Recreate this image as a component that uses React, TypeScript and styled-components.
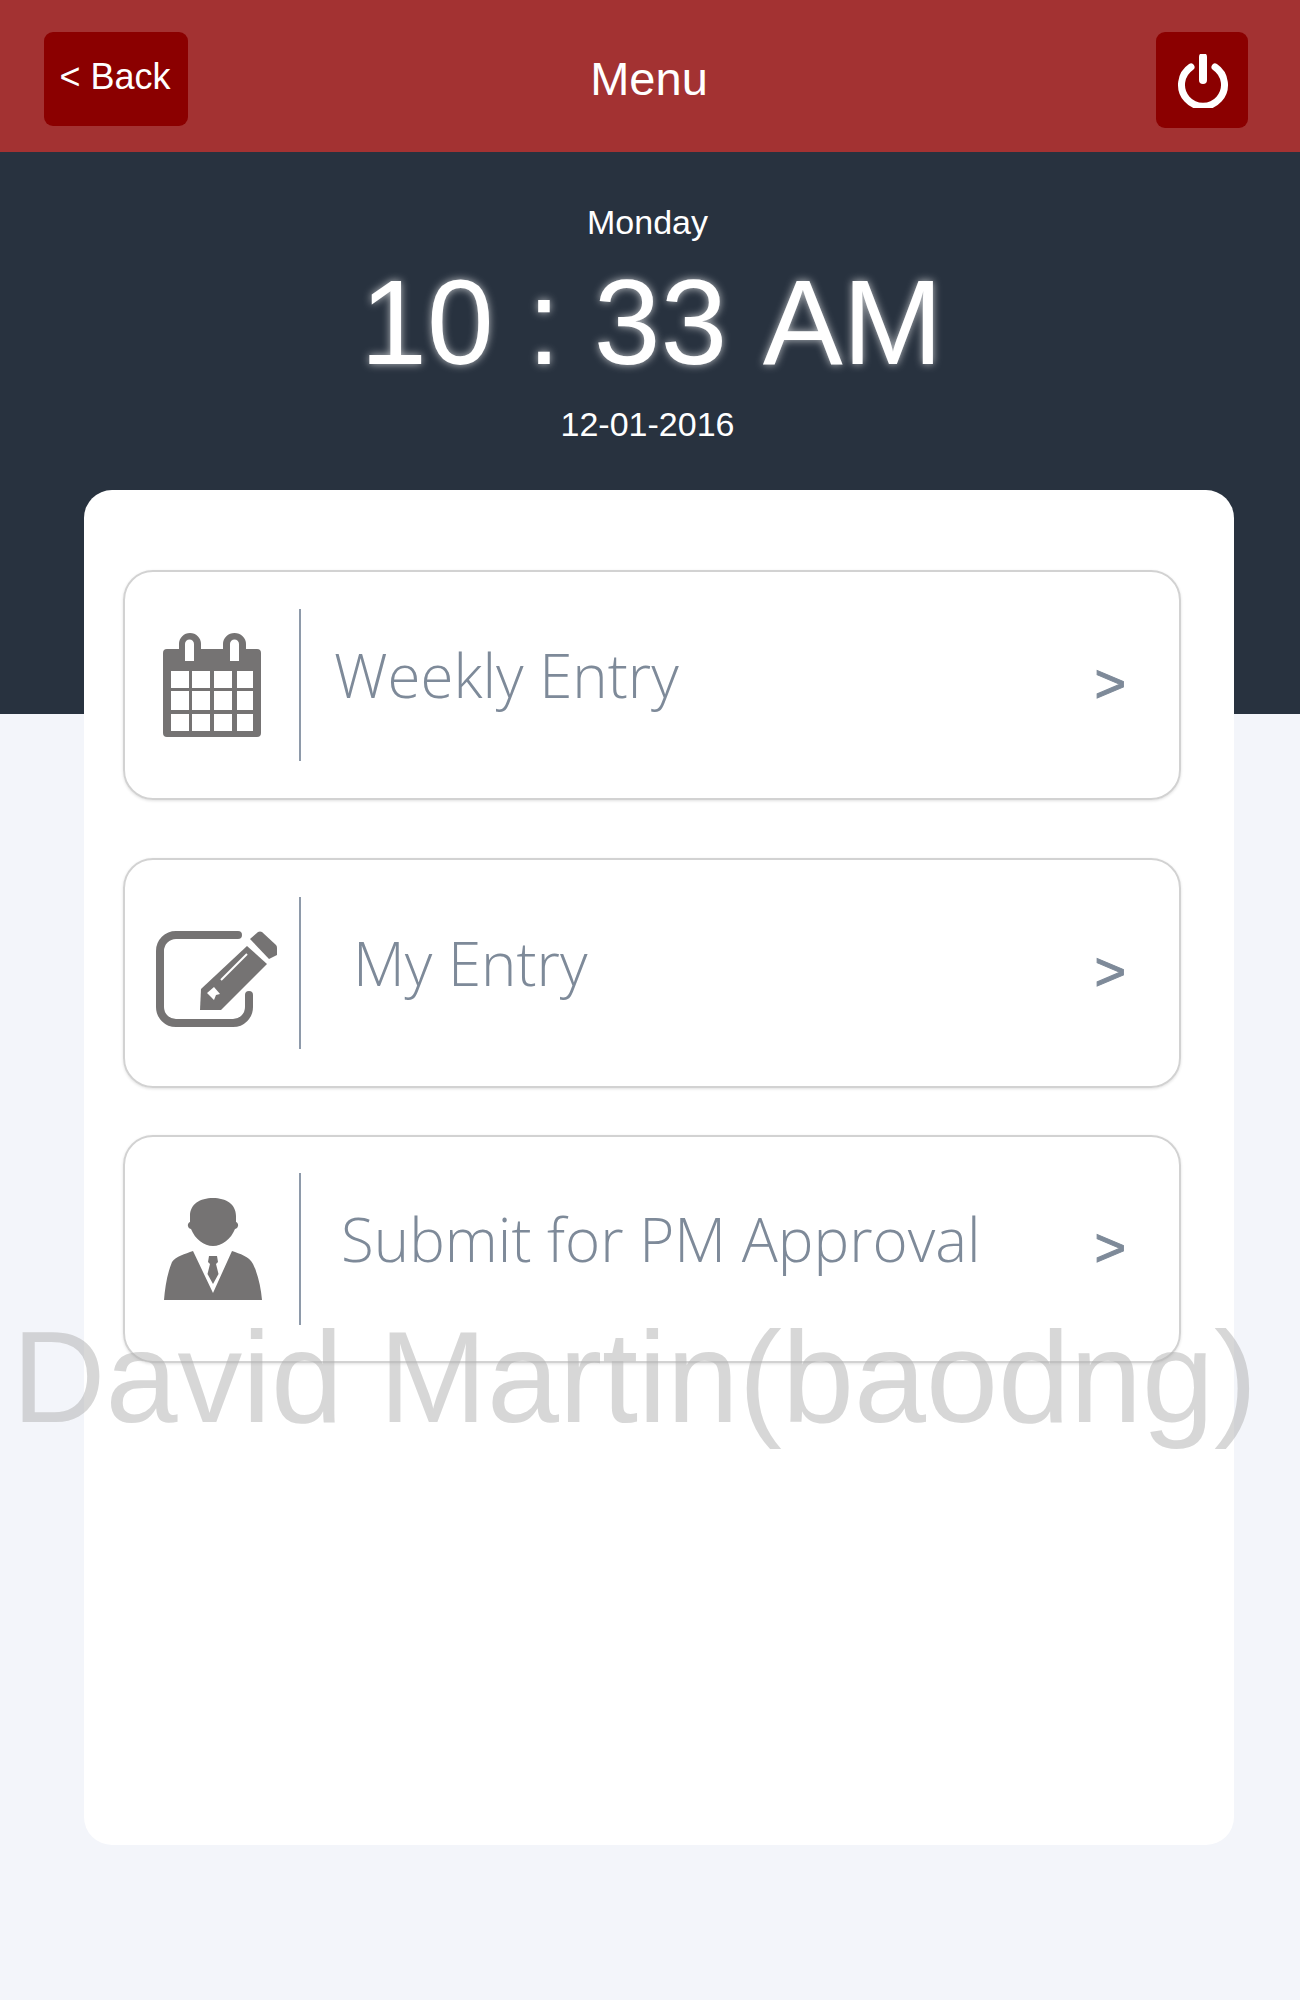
import React from 'react';
import styled, { createGlobalStyle } from 'styled-components';

const GlobalStyle = createGlobalStyle`
  html, body {
    margin: 0;
    padding: 0;
    background: #f3f5fa;
    font-family: "Liberation Sans", Arial, sans-serif;
  }
`;

const Page = styled.div`
  position: relative;
  width: 1300px;
  height: 2000px;
  overflow: hidden;
  background: #f3f5fa;
`;

const Header = styled.header`
  height: 152px;
  background: #a33232;
  display: flex;
  align-items: flex-start;
  justify-content: space-between;
  padding: 32px 52px 0 44px;
  box-sizing: border-box;
`;

const BackButton = styled.button`
  width: 144px;
  height: 94px;
  padding: 0 2px 4px 0;
  border: 0;
  border-radius: 9px;
  background: #8b0000;
  color: #fff;
  font: 36px "Liberation Sans", Arial, sans-serif;
`;

const Title = styled.h1`
  margin: 20px 46px 0 0;
  color: #fff;
  font-size: 47px;
  line-height: 54px;
  font-weight: 400;
`;

const PowerButton = styled.button`
  width: 92px;
  height: 96px;
  padding: 2px 0 0 2px;
  border: 0;
  border-radius: 9px;
  background: #8b0000;
  display: flex;
  align-items: center;
  justify-content: center;
`;

const Hero = styled.section`
  height: 562px;
  background: #28323f;
  color: #fff;
  display: flex;
  flex-direction: column;
  align-items: center;
  padding: 50px 5px 0 0;
  box-sizing: border-box;
`;

const SmallLine = styled.div`
  font-size: 34px;
  line-height: 40px;
`;

const Clock = styled.div`
  font-size: 120px;
  line-height: 140px;
  margin: 10px 0 12px 8px;
  white-space: pre;
  text-shadow: 0 0 8px rgba(255, 255, 255, 0.7);
`;

const Meridiem = styled.span`
  margin-left: 2px;
`;

const Card = styled.main`
  width: 1150px;
  height: 1355px;
  margin: -224px 0 0 84px;
  padding: 80px 53px 0 39px;
  box-sizing: border-box;
  background: #fff;
  border-radius: 28px;
  position: relative;
`;

const Row = styled.div<{ $gap: number; $height: number }>`
  height: ${(p) => p.$height}px;
  margin-bottom: ${(p) => p.$gap}px;
  border: 2px solid #d2d2d2;
  border-radius: 30px;
  box-shadow: 0 1px 3px rgba(0, 0, 0, 0.12);
  box-sizing: border-box;
  display: flex;
  align-items: center;
`;

const IconSlot = styled.div<{ $left: number; $top: number }>`
  width: 174px;
  flex: none;
  display: flex;
  box-sizing: border-box;
  padding-left: ${(p) => p.$left}px;
  padding-top: ${(p) => p.$top}px;
`;

const Divider = styled.div`
  width: 2px;
  height: 152px;
  flex: none;
  background: #8e9aaa;
`;

const Label = styled.div<{ $indent: number }>`
  flex: 1;
  padding-left: ${(p) => p.$indent}px;
  padding-bottom: 20px;
  color: #7e8a99;
  font-family: "Open Sans", sans-serif;
  font-size: 60px;
  font-weight: 300;
  white-space: nowrap;
`;

const Arrow = styled.div`
  flex: none;
  margin-right: 53px;
  padding-bottom: 4px;
  color: #7e8a99;
  font-family: "Liberation Sans", Arial, sans-serif;
  font-size: 54px;
  -webkit-text-stroke: 1px #7e8a99;
`;

const Watermark = styled.div`
  position: absolute;
  left: 12px;
  top: 1302px;
  color: rgba(175, 175, 175, 0.5);
  font-size: 129.5px;
  line-height: 150px;
  white-space: nowrap;
`;

const PowerIcon = () => (
  <svg width="52" height="54" viewBox="0 0 52 54" fill="none" stroke="#fff" strokeLinecap="round">
    <path d="M14 13 A21.5 21.5 0 1 0 38 13" strokeWidth="7" />
    <path d="M26 3 V26" strokeWidth="8" />
  </svg>
);

const CalendarIcon = () => (
  <svg width="98" height="104" viewBox="0 0 98 104">
    <path
      fill="#757373"
      fillRule="evenodd"
      d="M4 16 H16 V11 A11 11 0 0 1 38 11 V16 H60 V11 A11.5 11 0 0 1 83 11 V16 H94 A4 4 0 0 1 98 20 V100 A4 4 0 0 1 94 104 H4 A4 4 0 0 1 0 100 V20 A4 4 0 0 1 4 16 Z
      M22 11 V28 H31 V11 A4.5 4.5 0 0 0 22 11 Z M67 11 V28 H76 V11 A4.5 4.5 0 0 0 67 11 Z
      M8 38 V55 H26 V38 Z M29 38 V55 H47 V38 Z M51 38 V55 H69 V38 Z M74 38 V55 H90 V38 Z
      M8 58 V77 H26 V58 Z M29 58 V77 H47 V58 Z M51 58 V77 H69 V58 Z M74 58 V77 H90 V58 Z
      M8 81 V98 H26 V81 Z M29 81 V98 H47 V81 Z M51 81 V98 H69 V81 Z M74 81 V98 H90 V81 Z"
    />
  </svg>
);

const EditIcon = () => (
  <svg width="121" height="96" viewBox="0 0 121 96">
    <path
      d="M82 4 H20 A16 16 0 0 0 4 20 V76 A16 16 0 0 0 20 92 H77 A16 16 0 0 0 93 76 V64"
      fill="none"
      stroke="#757373"
      strokeWidth="8"
      strokeLinecap="round"
    />
    <path fill="#757373" d="M45 58 L91 15 L111 33 L65 79 H44 Z" />
    <path fill="#757373" d="M94 8 L102 1 Q104 0 106 1 L120 14 Q121 15 121 17 V24 L113 28 Z" />
    <path fill="#fff" d="M51 62 L58 56 L64 63 L60 64 L58 69 L55 66 Z" />
    <path d="M65 49 L91 23" stroke="#fff" strokeWidth="2" />
  </svg>
);

const PersonIcon = () => (
  <svg width="98" height="102" viewBox="0 0 98 102">
    <path
      fill="#757373"
      d="M49 0 C62 0 72 6 72 18 V24 C75 25 75 30 71 31 C67 41 58 48 49 48 C40 48 31 41 27 31 C23 30 23 25 26 24 V18 C26 6 36 0 49 0 Z"
    />
    <path
      fill="#757373"
      d="M29 53 L49 95 L68 53 C76 56 85 58 89 66 C94 76 97 90 98 102 H0 C1 90 3 76 8 64 C12 58 21 56 29 53 Z"
    />
    <path fill="#fff" d="M32 52 H66 L49 90 Z" />
    <path fill="#757373" d="M45 58 H53 L54 64 L52 66 L54.5 76 L49 86 L43.5 76 L46 66 L44 64 Z" />
  </svg>
);

const rows = [
  { label: 'Weekly Entry', icon: <CalendarIcon />, left: 38, top: 0, indent: 33, gap: 58, height: 230 },
  { label: 'My Entry', icon: <EditIcon />, left: 31, top: 12, indent: 52, gap: 47, height: 230 },
  { label: 'Submit for PM Approval', icon: <PersonIcon />, left: 39, top: 0, indent: 40, gap: 0, height: 228 },
];

export default function App() {
  return (
    <Page>
      <GlobalStyle />
      <Header>
        <BackButton>&lt; Back</BackButton>
        <Title>Menu</Title>
        <PowerButton aria-label="Log out">
          <PowerIcon />
        </PowerButton>
      </Header>
      <Hero>
        <SmallLine>Monday</SmallLine>
        <Clock>
          10 : 33 <Meridiem>AM</Meridiem>
        </Clock>
        <SmallLine>12-01-2016</SmallLine>
      </Hero>
      <Card>
        {rows.map((row) => (
          <Row key={row.label} $gap={row.gap} $height={row.height}>
            <IconSlot $left={row.left} $top={row.top}>
              {row.icon}
            </IconSlot>
            <Divider />
            <Label $indent={row.indent}>{row.label}</Label>
            <Arrow>&gt;</Arrow>
          </Row>
        ))}
      </Card>
      <Watermark>David Martin(baodng)</Watermark>
    </Page>
  );
}
